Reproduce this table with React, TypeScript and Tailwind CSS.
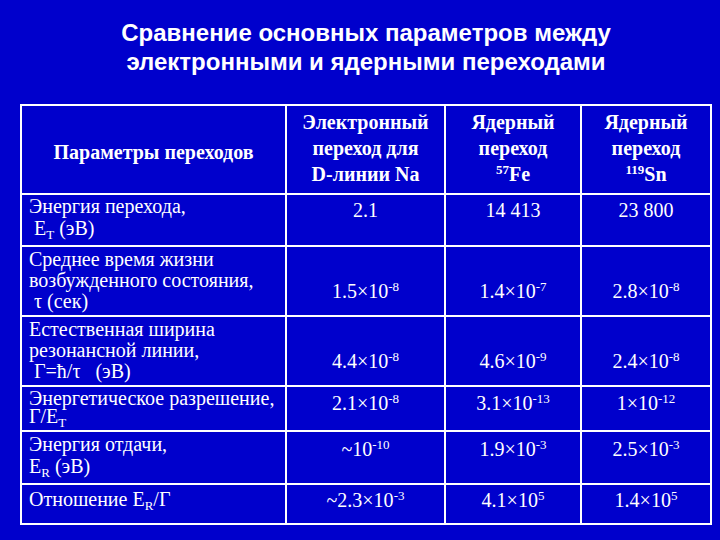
import React from 'react';

const Sup = ({ children }: { children: React.ReactNode }) => (
  <sup className="text-[13px] top-[-0.55em]">{children}</sup>
);

const Sub = ({ children }: { children: React.ReactNode }) => (
  <sub className="text-[13px] bottom-[-0.3em]">{children}</sub>
);

const cell = 'bg-[#0000cc] text-white';
const left = `${cell} pl-[7px] text-[20px] whitespace-nowrap`;
const val = `${cell} text-center text-[20px] leading-[22px]`;
const head = `${cell} text-center font-bold text-[20px] leading-[26px]`;

const App: React.FC = () => {
  return (
    <div className="w-[720px] h-[540px] bg-[#0000cc] overflow-hidden">
      {/* Title */}
      <div className="pt-[18px] pl-[20px] pr-[8px] text-center text-white font-bold text-[24px] leading-[29px] [font-family:Liberation_Sans,Arial,sans-serif]">
        <div>Сравнение основных параметров между</div>
        <div>электронными и ядерными переходами</div>
      </div>

      {/* Table */}
      <div className="mt-[28px] ml-[20px] w-[692px] grid grid-cols-[263px_157px_134px_128px] grid-rows-[87px_50px_68px_68px_43px_51px_38px] gap-[2px] p-[2px] bg-white [font-family:Liberation_Serif,serif]">
        {/* header */}
        <div className={`${head} pt-[33px]`}>Параметры переходов</div>
        <div className={`${head} pt-[3px]`}>
          <div>Электронный</div>
          <div>переход для</div>
          <div>D-линии Na</div>
        </div>
        <div className={`${head} pt-[3px]`}>
          <div>Ядерный</div>
          <div>переход</div>
          <div><Sup>57</Sup>Fe</div>
        </div>
        <div className={`${head} pt-[3px]`}>
          <div>Ядерный</div>
          <div>переход</div>
          <div><Sup>119</Sup>Sn</div>
        </div>

        {/* row 1 */}
        <div className={`${left} leading-[22px]`}>
          <div>Энергия перехода,</div>
          <div>&nbsp;E<Sub>T</Sub> (эВ)</div>
        </div>
        <div className={`${val} pt-[4px]`}>2.1</div>
        <div className={`${val} pt-[4px]`}>14 413</div>
        <div className={`${val} pt-[4px]`}>23 800</div>

        {/* row 2 */}
        <div className={`${left} leading-[21px] pt-[2px]`}>
          <div>Среднее время жизни</div>
          <div>возбужденного состояния,</div>
          <div>&nbsp;τ (сек)</div>
        </div>
        <div className={`${val} pt-[33px]`}>1.5×10<Sup>-8</Sup></div>
        <div className={`${val} pt-[33px]`}>1.4×10<Sup>-7</Sup></div>
        <div className={`${val} pt-[33px]`}>2.8×10<Sup>-8</Sup></div>

        {/* row 3 */}
        <div className={`${left} leading-[21px] pt-[2px]`}>
          <div>Естественная ширина</div>
          <div>резонансной линии,</div>
          <div className="whitespace-pre"> Γ=ħ/τ   (эВ)</div>
        </div>
        <div className={`${val} pt-[33px]`}>4.4×10<Sup>-8</Sup></div>
        <div className={`${val} pt-[33px]`}>4.6×10<Sup>-9</Sup></div>
        <div className={`${val} pt-[33px]`}>2.4×10<Sup>-8</Sup></div>

        {/* row 4 */}
        <div className={`${left} leading-[18px] pt-[2px]`}>
          <div>Энергетическое разрешение,</div>
          <div>Г/E<Sub>T</Sub></div>
        </div>
        <div className={`${val} pt-[5px]`}>2.1×10<Sup>-8</Sup></div>
        <div className={`${val} pt-[5px]`}>3.1×10<Sup>-13</Sup></div>
        <div className={`${val} pt-[5px]`}>1×10<Sup>-12</Sup></div>

        {/* row 5 */}
        <div className={`${left} leading-[22px] pt-[1px]`}>
          <div>Энергия отдачи,</div>
          <div>E<Sub>R</Sub> (эВ)</div>
        </div>
        <div className={`${val} pt-[6px]`}>~10<Sup>-10</Sup></div>
        <div className={`${val} pt-[6px]`}>1.9×10<Sup>-3</Sup></div>
        <div className={`${val} pt-[6px]`}>2.5×10<Sup>-3</Sup></div>

        {/* row 6 */}
        <div className={`${left} leading-[22px] pt-[3px]`}>
          <div>Отношение E<Sub>R</Sub>/Г</div>
        </div>
        <div className={`${val} pt-[4px]`}>~2.3×10<Sup>-3</Sup></div>
        <div className={`${val} pt-[4px]`}>4.1×10<Sup>5</Sup></div>
        <div className={`${val} pt-[4px]`}>1.4×10<Sup>5</Sup></div>
      </div>
    </div>
  );
};

export default App;
